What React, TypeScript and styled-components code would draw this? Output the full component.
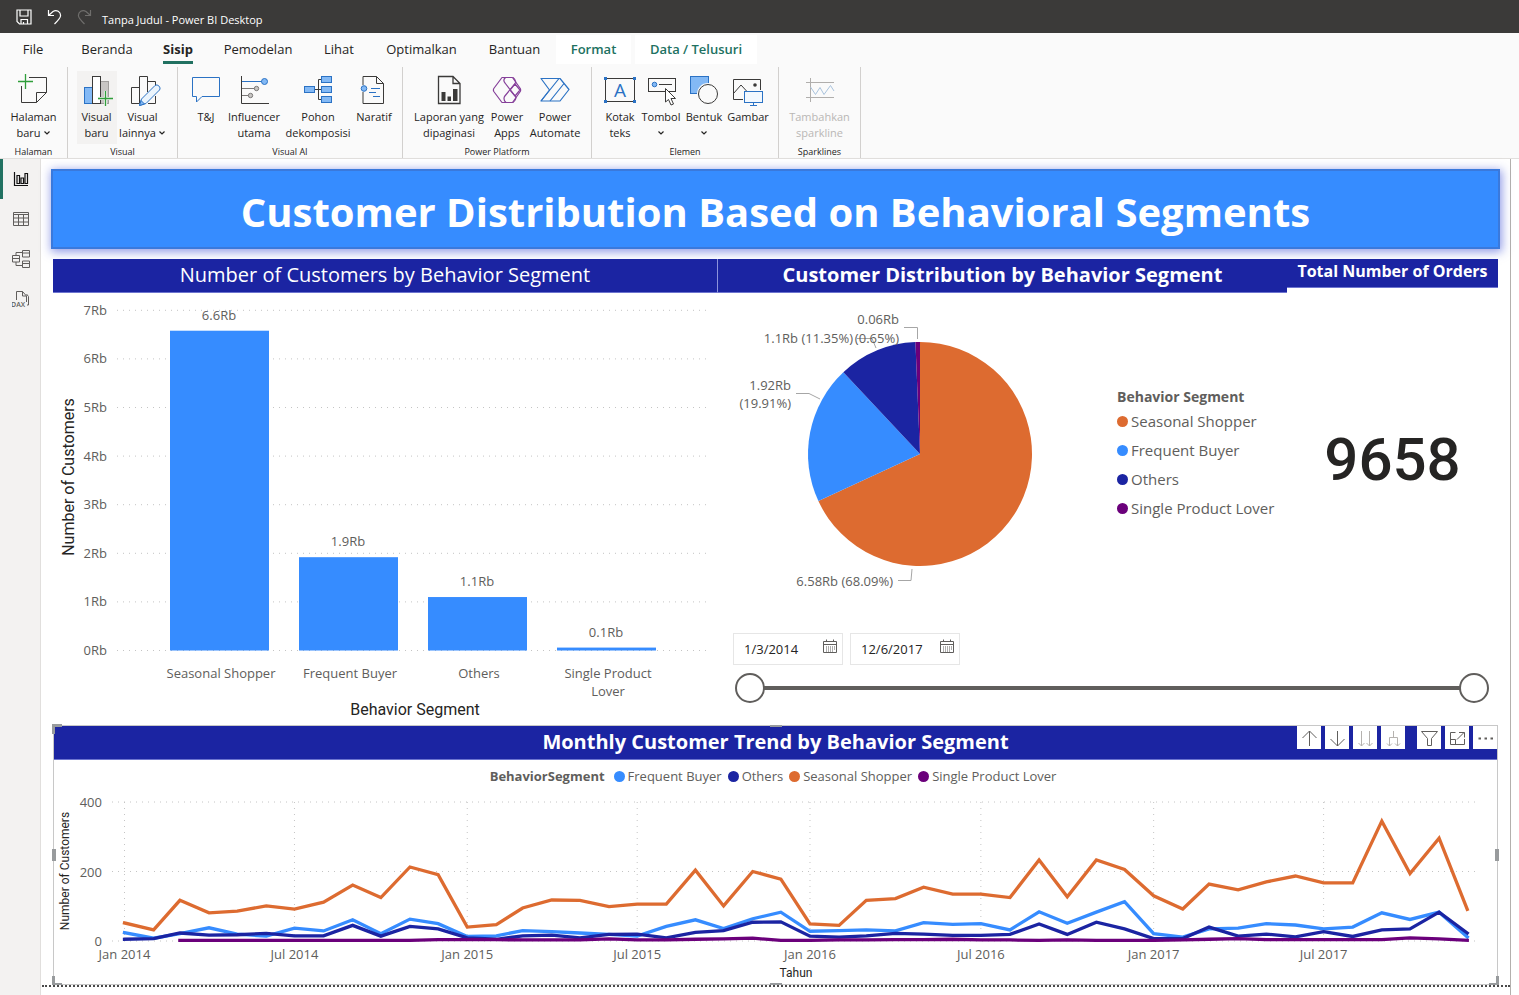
import React, { useState } from "react";
import styled, { createGlobalStyle } from "styled-components";

const UI_FONT = `"Open Sans", "Noto Sans", sans-serif`;
const DIN_FONT = `Roboto, "Liberation Sans", sans-serif`;

const color = {
  azure: "#368cff",
  navy: "#1b24a2",
  orange: "#dd6b30",
  purple: "#6b007b",
  green: "#217161",
  text: "#252423",
  muted: "#605e5c",
  grid: "#c4c4c4",
  leader: "#a6a6a6",
};

const GlobalStyle = createGlobalStyle`
  * { box-sizing: border-box; }
  body { margin: 0; background: #fff; font-family: ${UI_FONT}; color: ${color.text}; }
  button, input { font-family: inherit; color: inherit; }
  h1, h2 { margin: 0; }
`;

/* ---------- application frame ---------- */

const Frame = styled.div`
  display: flex;
  flex-direction: column;
  min-height: 100vh;
`;

const TitleBar = styled.header`
  display: flex;
  align-items: center;
  gap: 14px;
  height: 33px;
  padding-left: 16px;
  background: #3b3a39;
  color: #fff;
  font-size: 11px;
`;

const TitleButton = styled.button`
  display: flex;
  width: 16px;
  height: 16px;
  padding: 0;
  border: 0;
  background: none;
  color: #fff;
  &:disabled { color: #6f6e6c; }
`;

const AppTitle = styled.span`
  padding-top: 6px;
  margin-left: -4px;
`;

const TabBar = styled.nav`
  display: flex;
  height: 34px;
  padding-top: 2px;
  background: #fafafa;
`;

const Tab = styled.button<{ $width: number; $kind?: "active" | "context" }>`
  width: ${(p) => p.$width}px;
  height: 29px;
  padding: 0;
  border: 0;
  margin-right: ${(p) => (p.$kind === "context" ? 4 : 0)}px;
  background: ${(p) => (p.$kind === "context" ? "#fff" : "none")};
  color: ${(p) => (p.$kind === "context" ? color.green : color.text)};
  font-size: 13px;
  line-height: 28px;
  font-weight: ${(p) => (p.$kind === "active" ? 700 : p.$kind === "context" ? 600 : 400)};
  white-space: nowrap;
`;

const TabText = styled.span<{ $active: boolean }>`
  display: inline-block;
  height: 29px;
  border-bottom: 3px solid ${(p) => (p.$active ? color.green : "transparent")};
`;

const Ribbon = styled.div`
  display: flex;
  height: 92px;
  background: #fafafa;
  border-bottom: 1px solid #e1dfdd;
`;

const Group = styled.section<{ $width: number }>`
  display: flex;
  flex-direction: column;
  width: ${(p) => p.$width}px;
  height: 91px;
  padding-top: 4px;
  border-right: 1px solid #d2d0ce;
`;

const GroupItems = styled.div`
  display: flex;
  flex: none;
  justify-content: center;
  height: 75px;
`;

const GroupLabel = styled.div`
  font-size: 9px;
  line-height: 12px;
  text-align: center;
`;

const Tool = styled.button<{ $width: number; $hot?: boolean }>`
  display: flex;
  flex: none;
  flex-direction: column;
  align-items: center;
  width: ${(p) => p.$width}px;
  height: 73px;
  padding: 3px 0 0;
  border: 0;
  background: ${(p) => (p.$hot ? "#f3f2f1" : "none")};
  font-size: 11px;
  line-height: 16px;
  &:disabled { color: #b9b7b5; }
`;

const ToolIcon = styled.svg`
  flex: none;
  width: 32px;
  height: 32px;
  margin-bottom: 3px;
  overflow: visible;
`;

const ToolLine = styled.span`
  display: flex;
  align-items: center;
  gap: 2px;
  min-height: 16px;
  white-space: nowrap;
`;

const Workspace = styled.div`
  display: flex;
  flex: 1;
`;

const ViewRail = styled.nav`
  width: 41px;
  flex: none;
  background: #f3f2f1;
  border-right: 1px solid #e1dfdd;
`;

const ViewButton = styled.button<{ $active?: boolean }>`
  display: flex;
  align-items: center;
  justify-content: center;
  width: 40px;
  height: 40px;
  padding: 0 1px 0 0;
  border: 0;
  border-left: 3px solid ${(p) => (p.$active ? color.green : "transparent")};
  background: none;
  color: ${(p) => (p.$active ? "#111" : "#605e5c")};
`;

/* ---------- report page ---------- */

const Page = styled.main`
  flex: 1;
  min-width: 0;
  margin-right: 8px;
  padding-top: 10px;
  border-right: 1px solid #b3b0ad;
`;

const Banner = styled.h1`
  display: flex;
  align-items: center;
  justify-content: center;
  height: 80px;
  margin: 0 10px;
  padding-top: 6px;
  border: 2px solid #3a79dc;
  background: ${color.azure};
  box-shadow: 1px 2px 9px 1px rgba(40, 60, 210, 0.5);
  color: #fff;
  font-size: 40px;
  line-height: 56px;
  white-space: nowrap;
`;

const Board = styled.div`
  display: grid;
  grid-template-columns: 665fr 569fr 211fr;
  grid-template-rows: auto 1fr;
  margin: 10px 12px 0;
`;

const Visual = styled.section<{ $rows?: number; $cols?: number }>`
  grid-row: span ${(p) => p.$rows ?? 1};
  grid-column: span ${(p) => p.$cols ?? 1};
  min-width: 0;
`;

const VisualTitle = styled.h2<{ $size?: "small"; $light?: boolean; $rule?: boolean }>`
  height: ${(p) => (p.$size ? 29 : 34)}px;
  border-right: ${(p) => (p.$rule ? "1px solid #8d93dc" : "0")};
  border-bottom: 1px solid #6d74cf;
  background: ${color.navy};
  color: #fff;
  font-size: ${(p) => (p.$size ? 16 : 20)}px;
  font-weight: ${(p) => (p.$light ? 400 : 700)};
  line-height: ${(p) => (p.$size ? 25 : 31)}px;
  text-align: center;
  white-space: nowrap;
`;

const Chart = styled.svg`
  display: block;
  width: 100%;
  height: auto;
  fill: ${color.muted};
  font-family: ${UI_FONT};
  font-size: 13px;
`;

const PieBody = styled.div`
  display: grid;
  grid-template-columns: 390fr 179fr;
`;

const PieLegend = styled.ul`
  margin: 0;
  padding: 94px 0 0 9px;
  list-style: none;
  color: ${color.muted};
  font-size: 15px;
  line-height: 29px;
  white-space: nowrap;
`;

const LegendHeading = styled.li`
  font-weight: 700;
  line-height: 20px;
`;

const PieLegendHeading = styled(LegendHeading)`
  font-size: 14px;
`;

const LegendItem = styled.li`
  display: flex;
  align-items: center;
  gap: 3px;
`;

const Dot = styled.span<{ $color: string }>`
  width: 11px;
  height: 11px;
  border-radius: 50%;
  background: ${(p) => p.$color};
`;

const CardValue = styled.div`
  padding-top: 137px;
  font-family: ${DIN_FONT};
  font-size: 60px;
  font-weight: 500;
  line-height: 70px;
  text-align: center;
`;

const Slicer = styled(Visual)`
  padding: 13px 9px 0 15px;
`;

const DateRow = styled.div`
  display: flex;
  gap: 7px;
`;

const DateBox = styled.div`
  display: flex;
  align-items: center;
  width: 110px;
  height: 32px;
  padding: 0 4px 0 10px;
  border: 1px solid #e6e6e6;
`;

const DateInput = styled.input`
  flex: 1;
  min-width: 0;
  padding: 0;
  border: 0;
  outline: 0;
  background: none;
  font-size: 13px;
`;

const CalendarButton = styled.button`
  display: flex;
  width: 16px;
  height: 16px;
  padding: 0;
  margin-bottom: 4px;
  border: 0;
  background: none;
`;

const RangeTrack = styled.div`
  display: grid;
  align-items: center;
  height: 30px;
  margin: 8px 0 0 2px;
  background: linear-gradient(${color.muted}, ${color.muted}) center / calc(100% - 30px) 4px no-repeat;
`;

const RangeInput = styled.input`
  grid-area: 1 / 1;
  width: 100%;
  height: 30px;
  margin: 0;
  appearance: none;
  background: none;
  pointer-events: none;
  &::-webkit-slider-thumb {
    appearance: none;
    width: 30px;
    height: 30px;
    border: 2px solid ${color.muted};
    border-radius: 50%;
    background: #fff;
    pointer-events: auto;
  }
`;

const TrendVisual = styled.section`
  position: relative;
  margin: 0 12px;
  border: 1px solid #c8c8c8;
`;

const TrendLegend = styled.ul`
  display: flex;
  justify-content: center;
  gap: 6px;
  height: 30px;
  margin: 0;
  padding: 2px 5px 0 0;
  list-style: none;
  color: ${color.muted};
  font-size: 13px;
  line-height: 28px;
  white-space: nowrap;
`;

const TrendHeading = styled(LegendHeading)`
  line-height: 28px;
  margin-right: 3px;
`;

const VisualActions = styled.div`
  position: absolute;
  top: 0;
  right: 0;
  display: flex;
  gap: 4px;
`;

const ActionButton = styled.button<{ $apart?: boolean }>`
  display: flex;
  align-items: center;
  justify-content: center;
  width: 24px;
  height: 23px;
  margin-left: ${(p) => (p.$apart ? 8 : 0)}px;
  padding: 2px 0 0;
  border: 0;
  background: #fff;
  color: #605e5c;
  &:disabled { color: #b5b2af; }
`;

type Side = "tl" | "bl" | "br" | "t" | "b" | "l" | "r";
const handlePlace: Record<Side, string> = {
  tl: "top:-2px;left:-2px;width:10px;height:10px;border-width:3px 0 0 3px;",
  bl: "bottom:-1px;left:-2px;width:10px;height:9px;border-width:0 0 2px 3px;",
  br: "bottom:-1px;right:-2px;width:10px;height:9px;border-width:0 3px 2px 0;",
  t: "top:-1px;left:calc(50% - 6px);width:12px;border-width:2px 0 0;",
  b: "bottom:-1px;left:calc(50% - 6px);width:12px;border-width:2px 0 0;",
  l: "left:-2px;top:calc(50% - 6px);height:12px;border-width:0 0 0 4px;",
  r: "right:-2px;top:calc(50% - 6px);height:12px;border-width:0 0 0 4px;",
};
const Handle = styled.span<{ $side: Side }>`
  position: absolute;
  border: 0 solid #989b9d;
  ${(p) => handlePlace[p.$side]}
`;

const PageEnd = styled.div`
  margin-left: 1px;
  border-bottom: 2px dotted #4a4a4a;
`;

/* ---------- icons ---------- */

const DARK = "#3b3a39";
const BLUE = "#2b72c4";
const SKY = "#83b9f5";
const LEAF = "#2f9e3a";

const icons: Record<string, React.ReactNode> = {
  page: (
    <>
      <path d="M11 3.500H28.500V18.500L18.500 28.500H3.500V12M28.500 18.500H18.500V28.500" stroke={DARK} />
      <path d="M7.500 0V15M0 7.500H15" stroke={LEAF} strokeWidth="1.300" />
    </>
  ),
  visualNew: (
    <>
      <rect x="3.500" y="13.500" width="8" height="16" fill={SKY} stroke={BLUE} />
      <rect x="19.500" y="7.500" width="8" height="22" fill="#c8c6c4" stroke="#a19f9d" />
      <rect x="11.500" y="2.500" width="8" height="27" fill="#fff" stroke={DARK} />
      <path d="M24.500 17V32M17 24.500H32" stroke="#f3f2f1" strokeWidth="3" />
      <path d="M24.500 17V32M17 24.500H32" stroke={LEAF} strokeWidth="1.300" />
    </>
  ),
  visualMore: (
    <>
      <path d="M12.500 13.500H4.500V29.500H12.500M12.500 29.500V2.500H20.500V18M20.500 7.500H28.500V12M28.500 22V29.500H21" stroke={DARK} />
      <path d="M12.500 31.500L14.500 25L28 11.500C30.500 9.500 34.500 13.500 32.500 16L19 29.500Z" fill="#eaf4fd" stroke={BLUE} />
      <path d="M12.500 31.500L14 26.500L17.500 30Z" fill={SKY} stroke={BLUE} />
    </>
  ),
  chat: <path d="M2.500 3.500H29.500V22.500H12L6.500 28V22.500H2.500Z" fill="#fafafa" stroke={BLUE} />,
  influencer: (
    <>
      <path d="M3.500 2V29.500H31" stroke={DARK} />
      <path d="M4 7.500H24" stroke={BLUE} />
      <path d="M4 14.500H17M4 21.500H11" stroke="#7a7877" />
      <circle cx="26.500" cy="7.500" r="3" fill={SKY} stroke={BLUE} />
      <circle cx="18.500" cy="14.500" r="2.200" fill="#c8c6c4" stroke="#7a7877" />
      <circle cx="12.500" cy="21.500" r="2.200" fill="#c8c6c4" stroke="#7a7877" />
    </>
  ),
  tree: (
    <>
      <path d="M12.500 15.500H19.500M19.500 5.500H16.500V25.500H19.500" stroke={DARK} />
      <g fill={SKY} stroke={BLUE}>
        <rect x="2.500" y="12.500" width="10" height="6" />
        <rect x="19.500" y="2.500" width="10" height="6" />
        <rect x="19.500" y="12.500" width="10" height="6" />
        <rect x="19.500" y="22.500" width="10" height="6" />
      </g>
    </>
  ),
  narrative: (
    <>
      <path d="M5 11V2.500H18.500L25.500 9.500V29.500H5V18M18.500 2.500V9.500H25.500" stroke={DARK} />
      <circle cx="6" cy="14.500" r="2.800" fill={SKY} stroke={BLUE} />
      <path d="M13 14.500H22M11 18.500H18M15 22.500H22" stroke={BLUE} />
    </>
  ),
  report: (
    <>
      <path d="M5.500 2.500H20L27 9.500V29.500H5.500ZM20 2.500V9.500H27" stroke={DARK} strokeWidth="1.300" />
      <path d="M8.500 18H12.500V27H8.500ZM14.500 22.500H18V27H14.500ZM20 15H24.500V27H20Z" fill={DARK} />
    </>
  ),
  powerApps: (
    <g stroke="#86409a" strokeWidth="1.200" strokeLinejoin="round">
      <path d="M11 3.500H21.500L29.300 14.500Q30 16 29.300 17.500L21.500 28.500H11L2.800 17.500Q2 16 2.800 14.500Z" />
      <path d="M14.500 3.500Q11.500 6 14 9L24.500 22.500Q26 25 22 28.500M22 3.500Q26 7 24 9.500L13.500 22.500Q12 26 15 28.500" />
      <path d="M19 16L24 10L29 16L24 22Z" />
    </g>
  ),
  powerAutomate: (
    <g stroke={BLUE} strokeWidth="1.200" strokeLinejoin="round">
      <path d="M2 4.500H21L30 15.500L21 27H2L10.500 16Z" />
      <path d="M20 4.500L2 27M25 9.500L11 27" />
    </g>
  ),
  textBox: (
    <>
      <rect x="1.500" y="4.500" width="29" height="23" stroke={DARK} />
      <path d="M0 3H3V6H0ZM29 3H32V6H29ZM0 26H3V29H0ZM29 26H32V29H29Z" fill={BLUE} />
      <text x="16" y="23" textAnchor="middle" fontSize="19" fill={BLUE}>A</text>
    </>
  ),
  button: (
    <>
      <rect x="3.500" y="4.500" width="27" height="13" stroke={DARK} />
      <circle cx="9.500" cy="10.500" r="2.300" fill={SKY} stroke={BLUE} />
      <path d="M14 10.500H27" stroke={DARK} />
      <path d="M20.500 14.500V28L23.500 25.500L26 31L28.500 30L26 24.500H30.500Z" fill="#fff" stroke={DARK} />
    </>
  ),
  shapes: (
    <>
      <rect x="2.500" y="2.500" width="18" height="17" fill={SKY} stroke={BLUE} />
      <circle cx="20" cy="20" r="11" fill="#fafafa" />
      <circle cx="20" cy="20" r="9.500" fill="#fafafa" stroke={DARK} />
    </>
  ),
  image: (
    <>
      <path d="M11 25.500H1.500V5.500H28.500V16M1.500 19.500L9 11L15 17.500" stroke={DARK} />
      <circle cx="23" cy="11" r="1.800" fill={DARK} />
      <rect x="12.500" y="17.500" width="18" height="11" fill="#f2f8fe" stroke={BLUE} />
      <path d="M21.500 28.500V31.500M18 31.500H25" stroke={BLUE} />
    </>
  ),
  sparkline: (
    <>
      <path d="M6.500 4V28M2 8.500H30M2 23.500H30" stroke="#b0aeac" />
      <path d="M6.500 13L11.500 20.500L16 13.500L20 20.500L26.500 11.500L30 17" stroke="#a9c3dd" />
    </>
  ),
};

const Chevron = () => (
  <svg width="8" height="6" viewBox="0 0 8 6" fill="none" stroke={color.text} strokeWidth="1.200" aria-hidden="true">
    <path d="M1.500 1.500L4 4L6.500 1.500" />
  </svg>
);

/* ---------- ribbon data ---------- */

type ToolDef = { icon: string; width: number; lines: string[]; menu?: boolean; hot?: boolean; disabled?: boolean };
const groups: { label: string; width: number; tools: ToolDef[] }[] = [
  { label: "Halaman", width: 68, tools: [{ icon: "page", width: 60, lines: ["Halaman", "baru"], menu: true }] },
  {
    label: "Visual",
    width: 110,
    tools: [
      { icon: "visualNew", width: 40, lines: ["Visual", "baru"], hot: true },
      { icon: "visualMore", width: 52, lines: ["Visual", "lainnya"], menu: true },
    ],
  },
  {
    label: "Visual AI",
    width: 225,
    tools: [
      { icon: "chat", width: 40, lines: ["T&J"] },
      { icon: "influencer", width: 56, lines: ["Influencer", "utama"] },
      { icon: "tree", width: 72, lines: ["Pohon", "dekomposisi"] },
      { icon: "narrative", width: 40, lines: ["Naratif"] },
    ],
  },
  {
    label: "Power Platform",
    width: 189,
    tools: [
      { icon: "report", width: 74, lines: ["Laporan yang", "dipaginasi"] },
      { icon: "powerApps", width: 42, lines: ["Power", "Apps"] },
      { icon: "powerAutomate", width: 54, lines: ["Power", "Automate"] },
    ],
  },
  {
    label: "Elemen",
    width: 187,
    tools: [
      { icon: "textBox", width: 40, lines: ["Kotak", "teks"] },
      { icon: "button", width: 42, lines: ["Tombol", ""], menu: true },
      { icon: "shapes", width: 44, lines: ["Bentuk", ""], menu: true },
      { icon: "image", width: 44, lines: ["Gambar"] },
    ],
  },
  { label: "Sparklines", width: 82, tools: [{ icon: "sparkline", width: 80, lines: ["Tambahkan", "sparkline"], disabled: true }] },
];

const tabs: { name: string; width: number; kind?: "active" | "context" }[] = [
  { name: "File", width: 66 },
  { name: "Beranda", width: 82 },
  { name: "Sisip", width: 60, kind: "active" },
  { name: "Pemodelan", width: 100 },
  { name: "Lihat", width: 62 },
  { name: "Optimalkan", width: 103 },
  { name: "Bantuan", width: 83 },
  { name: "Format", width: 75, kind: "context" },
  { name: "Data / Telusuri", width: 122, kind: "context" },
];

/* ---------- bar chart ---------- */

const bars = [
  { name: ["Seasonal Shopper"], value: 6.58, label: "6.6Rb" },
  { name: ["Frequent Buyer"], value: 1.92, label: "1.9Rb" },
  { name: ["Others"], value: 1.1, label: "1.1Rb" },
  { name: ["Single Product", "Lover"], value: 0.06, label: "0.1Rb" },
];

function BarChart() {
  const base = 357.5;
  const unit = 48.6;
  return (
    <Chart viewBox="0 0 665 432" role="img" aria-label="Number of Customers by Behavior Segment">
      {[0, 1, 2, 3, 4, 5, 6, 7].map((n) => (
        <g key={n}>
          <line x1="64" x2="658" y1={base - n * unit} y2={base - n * unit} stroke={color.grid} strokeDasharray="1 5" />
          <text x="54" y={base - n * unit + 4.5} textAnchor="end">{n}Rb</text>
        </g>
      ))}
      {bars.map((b, i) => {
        const x = 117 + i * 129;
        const top = base - b.value * unit;
        return (
          <g key={b.label} textAnchor="middle">
            <rect x={x} y={top} width="99" height={base - top} fill={color.azure} />
            <text x={x + 49} y={top - 11}>{b.label}</text>
            {b.name.map((line, k) => (
              <text key={line} x={x + 51} y={base + 27 + k * 18}>{line}</text>
            ))}
          </g>
        );
      })}
      <g fill={color.text} fontFamily={DIN_FONT} fontSize="16" textAnchor="middle">
        <text x="362" y="422">Behavior Segment</text>
        <text transform="translate(21 184) rotate(-90)">Number of Customers</text>
      </g>
    </Chart>
  );
}

/* ---------- pie chart ---------- */

const slices = [
  { name: "Seasonal Shopper", share: 0.6809, fill: color.orange },
  { name: "Frequent Buyer", share: 0.1991, fill: color.azure },
  { name: "Others", share: 0.1135, fill: color.navy },
  { name: "Single Product Lover", share: 0.0065, fill: color.purple },
];

function PieChart() {
  const cx = 202;
  const cy = 161;
  const r = 112;
  let from = 0;
  const point = (t: number) => `${cx + r * Math.sin(t * 2 * Math.PI)} ${cy - r * Math.cos(t * 2 * Math.PI)}`;
  return (
    <Chart viewBox="0 0 390 327" role="img" aria-label="Customer Distribution by Behavior Segment">
      {slices.map((s) => {
        const start = from;
        from += s.share;
        return (
          <path
            key={s.name}
            d={`M${cx} ${cy}L${point(start)}A${r} ${r} 0 ${s.share > 0.5 ? 1 : 0} 1 ${point(from)}Z`}
            fill={s.fill}
          />
        );
      })}
      <path
        d="M186 34.500H199.500V46M139 45.500H154L158 55M78 100.500H91L102 106M180 287.500H193L194 276"
        fill="none"
        stroke={color.leader}
      />
      <g textAnchor="end">
        <text x="181" y="31">0.06Rb</text>
        <text x="181" y="50">(0.65%)</text>
        <text x="135" y="50">1.1Rb (11.35%)</text>
        <text x="73" y="97">1.92Rb</text>
        <text x="73" y="115">(19.91%)</text>
        <text x="175" y="293">6.58Rb (68.09%)</text>
      </g>
    </Chart>
  );
}

/* ---------- trend chart ---------- */

const seasonal = [
  52, 32, 117, 81, 86, 101, 92, 112, 161, 125, 213, 191, 40, 47, 95, 118, 117, 99, 106, 106, 204, 101, 200, 178,
  49, 45, 117, 122, 155, 135, 135, 125, 233, 127, 233, 206, 130, 92, 164, 147, 170, 187, 167, 167, 345, 194, 296, 91,
];
const frequent = [
  24, 8, 21, 38, 20, 14, 37, 29, 61, 21, 63, 50, 13, 15, 30, 27, 23, 19, 14, 42, 61, 36, 64, 83,
  28, 30, 32, 29, 53, 48, 50, 32, 84, 51, 83, 113, 21, 11, 35, 37, 50, 46, 35, 40, 81, 62, 83, 12,
];
const others = [
  5, 7, 23, 17, 18, 22, 15, 15, 45, 14, 42, 35, 9, 5, 15, 17, 9, 19, 20, 9, 25, 30, 54, 55,
  14, 11, 15, 22, 20, 16, 16, 19, 49, 19, 54, 35, 7, 7, 40, 14, 20, 12, 27, 13, 32, 35, 83, 23,
];
const single = [
  2, 2, 2, 2, 2, 2, 2, 2, 2, 4, 4, 4, 3, 3, 3, 6, 3, 3, 5, 6, 8, 2,
  2, 3, 3, 4, 4, 5, 3, 3, 2, 3, 2, 2, 2, 3, 5, 7, 4, 4, 4, 4, 4, 9, 6, 2,
];

const trendSeries = [
  { name: "Frequent Buyer", fill: color.azure, first: 0, data: frequent },
  { name: "Others", fill: color.navy, first: 0, data: others },
  { name: "Seasonal Shopper", fill: color.orange, first: 0, data: seasonal },
  { name: "Single Product Lover", fill: color.purple, first: 2, data: single },
];

const monthX = (month: number) => {
  const days = (Date.UTC(2014, month, 1) - Date.UTC(2014, 0, 1)) / 86400000;
  return 70.5 + days * 0.939;
};
const trendY = (v: number) => 151 - v * 0.3475;
const ticks = ["Jan 2014", "Jul 2014", "Jan 2015", "Jul 2015", "Jan 2016", "Jul 2016", "Jan 2017", "Jul 2017"];

function TrendChart() {
  return (
    <Chart viewBox="0 0 1443 194" role="img" aria-label="Monthly Customer Trend by Behavior Segment">
      {[0, 200, 400].map((n) => (
        <g key={n}>
          <line x1="58" x2="1425" y1={trendY(n)} y2={trendY(n)} stroke={color.grid} strokeDasharray="1 5" />
          <text x="48" y={trendY(n) + 5} textAnchor="end">{n}</text>
        </g>
      ))}
      {ticks.map((t, i) => (
        <g key={t}>
          <line x1={monthX(i * 6)} x2={monthX(i * 6)} y1="12" y2="151" stroke={color.grid} strokeDasharray="1 5" />
          <text x={monthX(i * 6)} y="169" textAnchor="middle">{t}</text>
        </g>
      ))}
      {trendSeries.map((s) => (
        <polyline
          key={s.name}
          points={s.data.map((v, i) => `${monthX(i + s.first)},${trendY(v)}`).join(" ")}
          fill="none"
          stroke={s.fill}
          strokeWidth="3.300"
          strokeLinecap="square"
        />
      ))}
      <g fill={color.text} fontFamily={DIN_FONT} fontSize="12" textAnchor="middle">
        <text x="742" y="187">Tahun</text>
        <text transform="translate(15 81) rotate(-90)">Number of Customers</text>
      </g>
    </Chart>
  );
}

/* ---------- small controls ---------- */

const line = { fill: "none", stroke: "currentColor" } as const;

const viewIcons: { name: string; art: React.ReactNode }[] = [
  {
    name: "Report view",
    art: (
      <svg width="16" height="16" viewBox="0 0 16 16" {...line} strokeWidth="1.200">
        <path d="M1.500 1V14.500H15M4 4.500H6.500V12.500H4ZM8 7H10.500V12.500H8ZM12 2.500H14.500V12.500H12Z" />
      </svg>
    ),
  },
  {
    name: "Table view",
    art: (
      <svg width="16" height="16" viewBox="0 0 16 16" {...line}>
        <path d="M0.500 1.500H15.500V14.500H0.500ZM0.500 3.500H15.500M0.500 7H15.500M0.500 11H15.500M5.500 3.500V14.500M10.500 3.500V14.500" />
      </svg>
    ),
  },
  {
    name: "Model view",
    art: (
      <svg width="18" height="18" viewBox="0 0 18 18" {...line}>
        <path d="M10.500 0.500H17.500V7H10.500ZM10.500 3H17.500M0.500 5.500H7.500V12H0.500ZM0.500 8.500H7.500M10.500 11H17.500V17.500H10.500ZM10.500 13.500H17.500M4 5.500V2.500H10.500M4 12V15.500H10.500" />
      </svg>
    ),
  },
  {
    name: "DAX query view",
    art: (
      <svg width="18" height="18" viewBox="0 0 18 18" {...line}>
        <path d="M4.500 10V1.500H10.500L14.500 6V12M10.500 1.500V6H14.500M14.500 4L16.500 6.500V15H15" />
        <text x="-1" y="17" fontSize="7" fontWeight="600" fill="currentColor" stroke="none">DAX</text>
      </svg>
    ),
  },
];

const actions: { name: string; art: React.ReactNode; disabled?: boolean; apart?: boolean }[] = [
  { name: "Drill up", art: <path d="M8.500 16V1M1.500 8L8.500 1L15.500 8" /> },
  { name: "Drill down", art: <path d="M8.500 1V16M1.500 9L8.500 16L15.500 9" /> },
  { name: "Go to next level", art: <path d="M4.500 1V16M1.500 13L4.500 16L7.500 13M12.500 1V16M9.500 13L12.500 16L15.500 13" />, disabled: true },
  { name: "Expand next level", art: <path d="M8.500 1V7M4.500 16V7.500H12.500V16M2 13.500L4.500 16L7 13.500M10 13.500L12.500 16L15 13.500" />, disabled: true },
  { name: "Filters", art: <path d="M0.500 1.500H16.500L10.500 8.500V15.500H6.500V8.500Z" />, apart: true },
  { name: "Focus mode", art: <path d="M6.500 2.500H1.500V14.500H15.500V9M1.500 9.500H6.500V14.500M8 9.500L15 2.500M10 2.500H15.500V7.500" /> },
  { name: "More options", art: <path d="M1.500 8.500H4M7.500 8.500H10M13.500 8.500H16" strokeWidth="2.200" /> },
];

function DateField({ label, value }: { label: string; value: string }) {
  return (
    <DateBox>
      <DateInput aria-label={label} defaultValue={value} />
      <CalendarButton aria-label={`${label}: open calendar`}>
        <svg width="16" height="16" viewBox="0 0 16 16" {...line} stroke="#605e5c">
          <path d="M1.500 2.500H14.500V13.500H1.500ZM1.500 5.500H14.500M4.500 0.500V3M11.500 0.500V3" />
          <path d="M4 8H13M4 10H13M4 12H11" strokeDasharray="1 1" />
        </svg>
      </CalendarButton>
    </DateBox>
  );
}

function DateRange() {
  const [range, setRange] = useState<[number, number]>([0, 100]);
  return (
    <RangeTrack>
      <RangeInput
        type="range"
        aria-label="Start date"
        value={range[0]}
        onChange={(e) => setRange([Math.min(+e.target.value, range[1]), range[1]])}
      />
      <RangeInput
        type="range"
        aria-label="End date"
        value={range[1]}
        onChange={(e) => setRange([range[0], Math.max(+e.target.value, range[0])])}
      />
    </RangeTrack>
  );
}

/* ---------- page ---------- */

export default function App() {
  return (
    <Frame>
      <GlobalStyle />
      <TitleBar>
        <TitleButton aria-label="Save">
          <svg width="16" height="16" viewBox="0 0 16 16" {...line} strokeWidth="1.200">
            <path d="M1 1H15V15H3.500L1 12.500ZM4 1V7H12V1M5 15V10.500H11.500V15M7.500 13V15" />
          </svg>
        </TitleButton>
        <TitleButton aria-label="Undo">
          <svg width="16" height="16" viewBox="0 0 16 16" {...line} strokeWidth="1.200">
            <path d="M2.500 1V6.500H8M2.500 6.500L7 2.500C10.500 0 15 3 14.500 7C14.500 9 13 10.500 8.500 15" />
          </svg>
        </TitleButton>
        <TitleButton aria-label="Redo" disabled>
          <svg width="16" height="16" viewBox="0 0 16 16" {...line} strokeWidth="1.200">
            <path d="M14.500 1V6.500H9M14.500 6.500L10 2.500C6.500 0 2 3 2.500 7C2.500 9 4 10.500 8.500 15" />
          </svg>
        </TitleButton>
        <AppTitle>Tanpa Judul - Power BI Desktop</AppTitle>
      </TitleBar>

      <TabBar>
        {tabs.map((t) => (
          <Tab key={t.name} $width={t.width} $kind={t.kind}>
            <TabText $active={t.kind === "active"}>{t.name}</TabText>
          </Tab>
        ))}
      </TabBar>

      <Ribbon>
        {groups.map((g) => (
          <Group key={g.label} $width={g.width}>
            <GroupItems>
              {g.tools.map((t) => (
                <Tool key={t.icon} $width={t.width} $hot={t.hot} disabled={t.disabled}>
                  <ToolIcon viewBox="0 0 32 32" fill="none" aria-hidden="true">
                    {icons[t.icon]}
                  </ToolIcon>
                  {t.lines.map((text, i) => (
                    <ToolLine key={i}>
                      {text}
                      {t.menu && i === 1 && <Chevron />}
                    </ToolLine>
                  ))}
                </Tool>
              ))}
            </GroupItems>
            <GroupLabel>{g.label}</GroupLabel>
          </Group>
        ))}
      </Ribbon>

      <Workspace>
        <ViewRail>
          {viewIcons.map((v, i) => (
            <ViewButton key={v.name} aria-label={v.name} $active={i === 0}>
              {v.art}
            </ViewButton>
          ))}
        </ViewRail>

        <Page>
          <Banner>Customer Distribution Based on Behavioral Segments</Banner>
          <Board>
            <Visual $rows={2}>
              <VisualTitle $light $rule>Number of Customers by Behavior Segment</VisualTitle>
              <BarChart />
            </Visual>
            <Visual>
              <VisualTitle>Customer Distribution by Behavior Segment</VisualTitle>
              <PieBody>
                <PieChart />
                <PieLegend>
                  <PieLegendHeading>Behavior Segment</PieLegendHeading>
                  {slices.map((s) => (
                    <LegendItem key={s.name}>
                      <Dot $color={s.fill} />
                      {s.name}
                    </LegendItem>
                  ))}
                </PieLegend>
              </PieBody>
            </Visual>
            <Visual>
              <VisualTitle $size="small">Total Number of Orders</VisualTitle>
              <CardValue>9658</CardValue>
            </Visual>
            <Slicer $cols={2}>
              <DateRow>
                <DateField label="Start date" value="1/3/2014" />
                <DateField label="End date" value="12/6/2017" />
              </DateRow>
              <DateRange />
            </Slicer>
          </Board>

          <TrendVisual>
            <VisualTitle>Monthly Customer Trend by Behavior Segment</VisualTitle>
            <TrendLegend>
              <TrendHeading>BehaviorSegment</TrendHeading>
              {trendSeries.map((s) => (
                <LegendItem key={s.name}>
                  <Dot $color={s.fill} />
                  {s.name}
                </LegendItem>
              ))}
            </TrendLegend>
            <TrendChart />
            <VisualActions>
              {actions.map((a) => (
                <ActionButton key={a.name} aria-label={a.name} disabled={a.disabled} $apart={a.apart}>
                  <svg width="17" height="17" viewBox="0 0 17 17" {...line}>
                    {a.art}
                  </svg>
                </ActionButton>
              ))}
            </VisualActions>
            {(["tl", "bl", "br", "t", "b", "l", "r"] as Side[]).map((s) => (
              <Handle key={s} $side={s} />
            ))}
          </TrendVisual>
          <PageEnd />
        </Page>
      </Workspace>
    </Frame>
  );
}
